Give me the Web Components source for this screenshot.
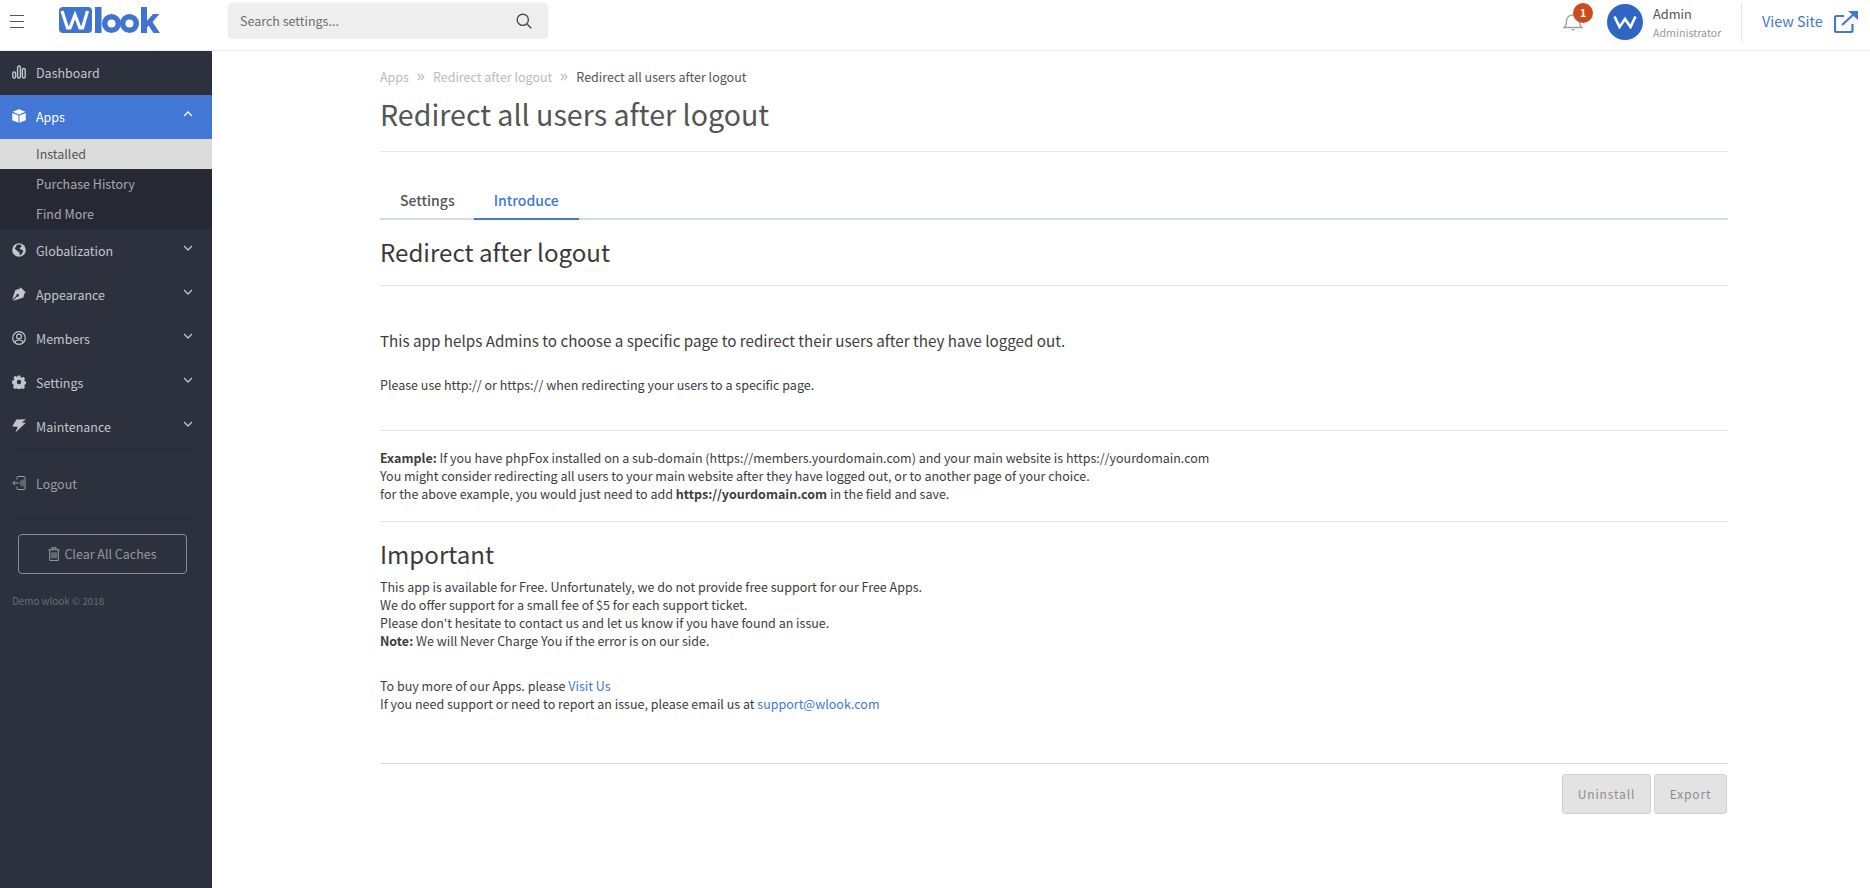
<!DOCTYPE html>
<html>
<head>
<meta charset="utf-8">
<style>
  html, body { margin: 0; height: 100%; }
  body { font-family: "Noto Sans CJK SC", "Open Sans", sans-serif; background: #fff; }
</style>
</head>
<body>
<wl-app></wl-app>
<script>
const FONT = '"Noto Sans CJK SC", "Open Sans", sans-serif';

const ICONS = {
  dashboard: '<svg viewBox="0 0 14 14" width="14" height="14"><g fill="none" stroke="currentColor" stroke-width="1.4"><rect x=".8" y="7" width="2.8" height="6" rx="1.3"/><rect x="5.6" y="1" width="2.8" height="12" rx="1.3"/><rect x="10.4" y="3.5" width="2.8" height="9.5" rx="1.3"/></g></svg>',
  apps: '<svg viewBox="0 0 14 14" width="14" height="14"><path fill="currentColor" d="M7 .3 13.300 2.800 7 5.400.7 2.800zM.3 3.900l6.200 2.500v7.400L.3 11.200zM13.700 3.900 7.500 6.400v7.400l6.200-2.600z"/></svg>',
  globe: '<svg viewBox="0 0 14 14" width="14" height="14"><circle cx="7" cy="7" r="6.800" fill="currentColor"/><path fill="#2d303d" d="M5 1.800 8.600 1.400 9.800 3.200 7.600 5.200 8.800 6.600 11.400 7.400 10.200 10.600 8 12.600 7.200 9.200 5 7.800 2.800 5.400z"/></svg>',
  pen: '<svg viewBox="0 0 14 14" width="14" height="14"><path fill="currentColor" d="M8.600.2 13.800 5.400 12.400 6.400 11.400 10.600 4.800 12.800.9 13.700 5.100 9.500a1.300 1.300 0 1 0-.7-.7L.3 13 1.200 9.200 3.400 3l4.200-1.200z"/></svg>',
  user: '<svg viewBox="0 0 14 14" width="14" height="14"><g fill="none" stroke="currentColor" stroke-width="1.2"><circle cx="7" cy="7" r="6.300"/><circle cx="7" cy="5.500" r="2.400"/><path d="M2.800 11.400c.6-2 2.200-2.400 4.200-2.400s3.600.4 4.200 2.400"/></g></svg>',
  gear: '<svg viewBox="0 0 14 14" width="14" height="14"><path fill="currentColor" fill-rule="evenodd" d="M5.600 0h2.800l.4 1.800 1.200.6 1.600-1 1.900 2-.9 1.600.5 1.200 1.900.4v2.800l-1.900.4-.5 1.200.9 1.600-1.900 2-1.600-1-1.200.6-.4 1.700H5.600l-.4-1.700-1.200-.6-1.600 1-1.900-2 .9-1.600-.5-1.200L-.5 8.400V5.600L1.400 5.200l.5-1.200-.9-1.600 1.900-2 1.600 1 1.200-.6zM7 4.600a2.400 2.400 0 1 0 0 4.800 2.400 2.400 0 0 0 0-4.800z" transform="translate(.5 .5) scale(.93)"/></svg>',
  bolt: '<svg viewBox="0 0 14 14" width="14" height="14"><path fill="currentColor" d="M4.400.4 14 .2 9.800 3.400 13.800 3.800 3.200 13.800 5.800 7.800.2 7.400z"/></svg>',
  logout: '<svg viewBox="0 0 14 14" width="14" height="14"><g fill="none" stroke="currentColor" stroke-width="1"><path d="M5 3.500V1.500a1 1 0 0 1 1-1h6a1 1 0 0 1 1 1v11a1 1 0 0 1-1 1H6a1 1 0 0 1-1-1v-2"/><path d="M.8 7h6M3 4.800.8 7 3 9.200"/><path d="M9 4.500v5M11 3.500v7"/></g></svg>',
  trash: '<svg viewBox="0 0 12 14" width="12" height="14"><g fill="none" stroke="currentColor" stroke-width="1.1"><path d="M.4 2.800h11.200M4 2.500V.9h4v1.600M1.700 3v9.600a.9.900 0 0 0 .9.900h6.800a.9.900 0 0 0 .9-.9V3"/><path d="M4 5.200v6M6 5.200v6M8 5.200v6"/></g></svg>',
  up: '<svg viewBox="0 0 10 6" width="10" height="6"><path fill="none" stroke="currentColor" stroke-width="1.3" d="M1 5l4-4 4 4"/></svg>',
  down: '<svg viewBox="0 0 10 6" width="10" height="6"><path fill="none" stroke="currentColor" stroke-width="1.3" d="M1 1l4 4 4-4"/></svg>',
  crumb: '<svg viewBox="0 0 9 9" width="8" height="8"><path fill="none" stroke="currentColor" stroke-width="1.4" d="M1 1l3.200 3.500L1 8M4.600 1l3.200 3.500L4.600 8"/></svg>'
};

class WlTopbar extends HTMLElement {
  constructor() {
    super();
    this.attachShadow({ mode: 'open' });
    this.shadowRoot.innerHTML = `
      <style>
        :host { display: flex; align-items: flex-start; height: 50px; background: #fff; border-bottom: 1px solid #e9e9e9; font-family: ${FONT}; flex: none; }
        .burger { width: 14px; margin: 15px 0 0 10px; display: flex; flex-direction: column; gap: 5px; }
        .burger i { display: block; height: 1px; background: #555; }
        .logo { margin-left: 34px; width: 104px; height: 40px; flex: none; }
        .search { margin: 3px 0 0 66px; width: 320px; height: 36px; background: #eee; border-radius: 4px; display: flex; align-items: center; justify-content: space-between; padding: 0 16px 0 12px; box-sizing: border-box; font-size: 12.5px; color: #6e6e6e; }
        .search span { margin-top: -2px; }
        .right { margin-left: auto; display: flex; align-items: center; height: 44px; }
        .bell { position: relative; width: 20px; height: 20px; margin-right: 24px; color: #a0a0a0; }
        .badge { position: absolute; left: 10px; top: -9px; width: 20px; height: 20px; border-radius: 50%; background: #cf4a1c; color: #fff; font-size: 10.5px; font-weight: 700; line-height: 19px; text-align: center; }
        .avatar { width: 36px; height: 36px; border-radius: 50%; background: #2f66c4; display: flex; align-items: center; justify-content: center; margin-right: 10px; }
        .who { width: 88px; }
        .who b { display: block; font-weight: 400; font-size: 12.8px; color: #555; line-height: 19px; margin-top: 1px; }
        .who span { display: block; font-size: 10.7px; color: #999; line-height: 19px; }
        .view { height: 39px; border-left: 1px solid #e6e6e6; padding-left: 20px; display: flex; align-items: center; gap: 11px; color: #4476d6; font-size: 14.4px; width: 129px; box-sizing: border-box; }
        .view span { margin-top: -3px; }
      </style>
      <div class="burger"><i></i><i></i><i></i></div>
      <svg class="logo" viewBox="0 0 104 40">
        <rect x="1" y="7" width="33" height="26" rx="4" fill="#3f75d1"/>
        <path d="M4 11l5.500 17h2.500l5-13 5 13h2.500l5-17" fill="none" stroke="#fff" stroke-width="3.200"/>
        <rect x="37" y="7" width="6.500" height="26" fill="#3f75d1"/>
        <g fill="none" stroke="#3f75d1" stroke-width="5.500"><circle cx="53.500" cy="23.500" r="6.800"/><circle cx="71.500" cy="23.500" r="6.800"/></g>
        <path d="M83 7h6v14l6-7h6.500l-7 8 7.500 11h-6.500l-5-7.500-1.500 2v5.500h-6z" fill="#3f75d1"/>
      </svg>
      <div class="search"><span>Search settings...</span>
        <svg viewBox="0 0 16 16" width="16" height="16"><g fill="none" stroke="#4c4c4c" stroke-width="1.4"><circle cx="6.800" cy="6.800" r="5.600"/><path d="M11 11l4.200 4.200"/></g></svg>
      </div>
      <div class="right">
        <div class="bell">
          <svg viewBox="0 0 20 20" width="20" height="20"><path fill="none" stroke="currentColor" stroke-width="1.300" d="M1 15.500c2-1.500 2.500-3 2.500-6C3.500 5.500 6 3 10 3s6.500 2.500 6.500 6.500c0 3 .5 4.500 2.500 6z"/><path fill="currentColor" d="M8 17h4l-2 2z"/></svg>
          <div class="badge">1</div>
        </div>
        <div class="avatar"><svg viewBox="0 0 24 14" width="24" height="14"><path fill="none" stroke="#fff" stroke-width="2.600" d="M1.500 1.500l5 10.500 5.500-8 5.500 8 5-10.500"/></svg></div>
        <div class="who"><b>Admin</b><span>Administrator</span></div>
        <div class="view"><span>View Site</span>
          <svg viewBox="0 0 24 22" width="24" height="22"><g fill="none" stroke="#4476d6" stroke-width="2.200"><path d="M18.500 13v6.500a1.500 1.500 0 0 1-1.500 1.500H2.500A1.500 1.500 0 0 1 1 19.500V6.500A1.500 1.500 0 0 1 2.500 5H10"/><path d="M8 14 20 3"/></g><path fill="#4476d6" d="M14 0h10v9z"/></svg>
        </div>
      </div>`;
  }
}
customElements.define('wl-topbar', WlTopbar);

class WlNavItem extends HTMLElement {
  constructor() {
    super();
    this.attachShadow({ mode: 'open' });
  }
  connectedCallback() {
    const icon = ICONS[this.getAttribute('icon')] || '';
    const chev = this.getAttribute('chev');
    this.shadowRoot.innerHTML = `
      <style>
        :host { display: flex; align-items: center; height: 44px; padding: 0 19px 0 12px; color: #c3c5ca; font-size: 12.5px; }
        :host([active]) { background: #4277d6; color: #fff; }
        :host([dim]) { color: #9b9da3; }
        .ic { width: 14px; height: 14px; display: flex; margin-right: 10px; margin-top: -3px; }
        .txt { flex: 1; margin-top: -2px; }
        .ch { display: flex; margin-top: -7px; }
      </style>
      <span class="ic">${icon}</span><span class="txt"><slot></slot></span>
      ${chev ? `<span class="ch">${ICONS[chev]}</span>` : ''}`;
  }
}
customElements.define('wl-nav-item', WlNavItem);

class WlSubItem extends HTMLElement {
  constructor() {
    super();
    this.attachShadow({ mode: 'open' });
    this.shadowRoot.innerHTML = `
      <style>
        :host { display: flex; align-items: center; height: 30px; padding-left: 36px; color: #a8a9af; font-size: 12.5px; background: #262833; padding-bottom: 2px; box-sizing: border-box; }
        :host([active]) { background: #dcdcdc; color: #555; }
      </style>
      <slot></slot>`;
  }
}
customElements.define('wl-sub-item', WlSubItem);

class WlSidebar extends HTMLElement {
  constructor() {
    super();
    this.attachShadow({ mode: 'open' });
    this.shadowRoot.innerHTML = `
      <style>
        :host { display: flex; flex-direction: column; width: 212px; flex: none; background: #2d303d; font-family: ${FONT}; }
        hr { border: 0; border-top: 1px solid #262833; margin: 0 20px 0 12px; height: 0; }
        .btn { margin: 15px 25px 0 18px; height: 40px; box-sizing: border-box; border: 1px solid #8c8d93; border-radius: 4px; display: flex; align-items: center; justify-content: center; gap: 4px; color: #96979d; font-size: 12.5px; padding-bottom: 1px; }
        .foot { margin: 20px 0 0 12px; font-size: 9.9px; color: #6b6d75; }
      </style>
      <wl-nav-item icon="dashboard">Dashboard</wl-nav-item>
      <wl-nav-item icon="apps" active chev="up">Apps</wl-nav-item>
      <wl-sub-item active>Installed</wl-sub-item>
      <wl-sub-item>Purchase History</wl-sub-item>
      <wl-sub-item>Find More</wl-sub-item>
      <wl-nav-item icon="globe" chev="down">Globalization</wl-nav-item>
      <wl-nav-item icon="pen" chev="down">Appearance</wl-nav-item>
      <wl-nav-item icon="user" chev="down">Members</wl-nav-item>
      <wl-nav-item icon="gear" chev="down">Settings</wl-nav-item>
      <wl-nav-item icon="bolt" chev="down">Maintenance</wl-nav-item>
      <hr>
      <wl-nav-item icon="logout" dim style="margin:12px 0">Logout</wl-nav-item>
      <hr>
      <div class="btn">${ICONS.trash}<span>Clear All Caches</span></div>
      <div class="foot">Demo wlook © 2018</div>`;
  }
}
customElements.define('wl-sidebar', WlSidebar);

class WlTabs extends HTMLElement {
  constructor() {
    super();
    this.attachShadow({ mode: 'open' });
    this.shadowRoot.innerHTML = `
      <style>
        :host { display: flex; border-bottom: 2px solid #d4dcdf; font-size: 14px; font-weight: 500; height: 32px; }
        span { padding: 0 20px; display: block; color: #555; line-height: 28px; height: 34px; box-sizing: border-box; }
        .on { color: #4277d6; border-bottom: 2px solid #4277d6; margin-left: -1px; }
      </style>
      <span>Settings</span><span class="on">Introduce</span>`;
  }
}
customElements.define('wl-tabs', WlTabs);

class WlActions extends HTMLElement {
  constructor() {
    super();
    this.attachShadow({ mode: 'open' });
    this.shadowRoot.innerHTML = `
      <style>
        :host { display: flex; justify-content: flex-end; gap: 3px; border-top: 1px solid #d6d6d6; padding: 10px 1px 0 0; }
        span { height: 40px; box-sizing: border-box; border: 1px solid #d0d0d0; border-radius: 3px; background: #e3e3e3; color: #8e8e8e; font-size: 12px; font-weight: 400; letter-spacing: .85px; display: flex; align-items: center; justify-content: center; }
        .a { width: 89px; }
        .b { width: 73px; }
      </style>
      <span class="a">Uninstall</span><span class="b">Export</span>`;
  }
}
customElements.define('wl-actions', WlActions);

class WlContent extends HTMLElement {
  constructor() {
    super();
    this.attachShadow({ mode: 'open' });
    this.shadowRoot.innerHTML = `
      <style>
        :host { display: block; flex: 1; padding: 0 142px 0 168px; font-family: ${FONT}; color: #3d3d3d; font-size: 12.5px; line-height: 18px; }
        .crumbs { display: flex; align-items: center; gap: 8px; height: 18px; margin-top: 17px; font-size: 12.5px; color: #bbb; }
        .crumbs b { font-weight: 400; color: #555; }
        h1 { font-weight: 400; font-size: 28.6px; line-height: 40px; margin: 8px 0 0; color: #555; }
        .rule { border: 0; border-top: 1px solid #e6e6e6; margin: 0; }
        h2 { font-weight: 400; font-size: 24.1px; line-height: 34px; margin: 0; color: #3a3a3a; }
        p { margin: 0; }
        a { color: #4277d6; text-decoration: none; }
        b { font-weight: 700; }
        .lead { font-size: 15.2px; line-height: 22px; }
      </style>
      <div class="crumbs"><span>Apps</span>${ICONS.crumb}<span>Redirect after logout</span>${ICONS.crumb}<b>Redirect all users after logout</b></div>
      <h1>Redirect all users after logout</h1>
      <hr class="rule" style="margin-top:17px">
      <wl-tabs style="margin-top:34px"></wl-tabs>
      <h2 style="margin-top:15px">Redirect after logout</h2>
      <hr class="rule" style="margin-top:16px">
      <p class="lead" style="margin-top:43px">This app helps Admins to choose a specific page to redirect their users after they have logged out.</p>
      <p style="margin-top:25px">Please use http:// or https:// when redirecting your users to a specific page.</p>
      <hr class="rule" style="margin-top:36px">
      <p style="margin-top:18px"><b>Example:</b> If you have phpFox installed on a sub-domain (https://members.yourdomain.com) and your main website is https://yourdomain.com<br>
      You might consider redirecting all users to your main website after they have logged out, or to another page of your choice.<br>
      for the above example, you would just need to add <b>https://yourdomain.com</b> in the field and save.</p>
      <hr class="rule" style="margin-top:18px">
      <h2 style="margin-top:15px">Important</h2>
      <p style="margin-top:7px">This app is available for Free. Unfortunately, we do not provide free support for our Free Apps.<br>
      We do offer support for a small fee of $5 for each support ticket.<br>
      Please don't hesitate to contact us and let us know if you have found an issue.<br>
      <b>Note:</b> We will Never Charge You if the error is on our side.</p>
      <p style="margin-top:27px">To buy more of our Apps. please <a>Visit Us</a><br>
      If you need support or need to report an issue, please email us at <a>support@wlook.com</a></p>
      <wl-actions style="margin-top:50px"></wl-actions>`;
  }
}
customElements.define('wl-content', WlContent);

class WlApp extends HTMLElement {
  constructor() {
    super();
    this.attachShadow({ mode: 'open' });
    this.shadowRoot.innerHTML = `
      <style>
        :host { display: flex; flex-direction: column; height: 100vh; overflow: hidden; }
        .body { display: flex; flex: 1; min-height: 0; }
      </style>
      <wl-topbar></wl-topbar>
      <div class="body"><wl-sidebar></wl-sidebar><wl-content></wl-content></div>`;
  }
}
customElements.define('wl-app', WlApp);
</script>
</body>
</html>
